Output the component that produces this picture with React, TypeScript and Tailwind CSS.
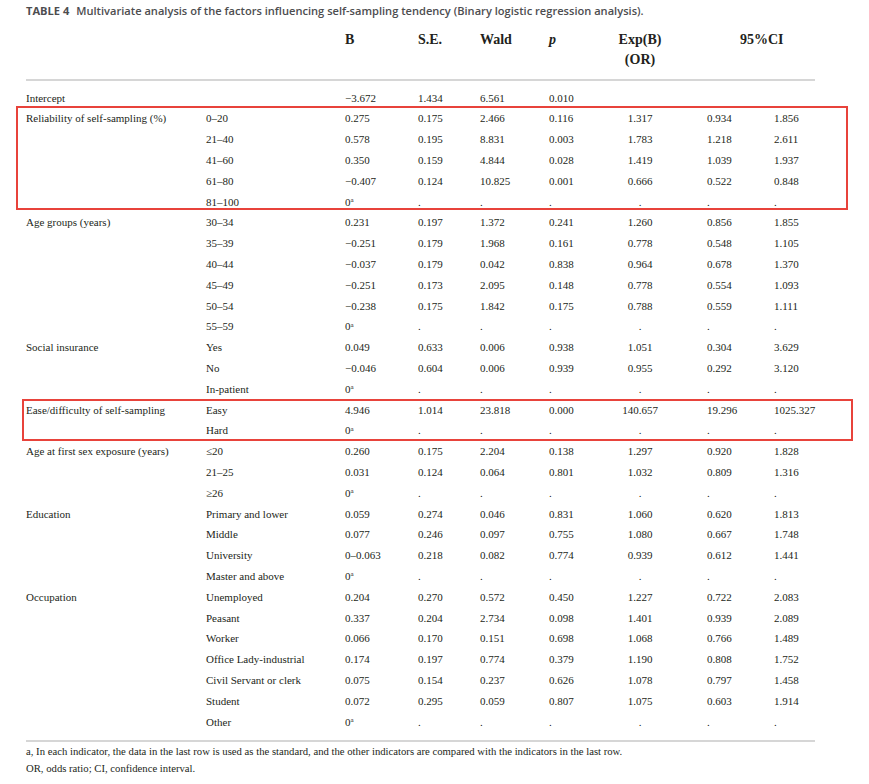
import React from 'react';

type Row = [string, string, string, string, string, string, string, string];

interface Group {
  label: string;
  rows: Row[];
  box?: string;
}

const R = 'REF';
const D = '.';

const groups: Group[] = [
  { label: 'Intercept', rows: [['', '−3.672', '1.434', '6.561', '0.010', '', '', '']] },
  {
    label: 'Reliability of self-sampling (%)',
    box: 'left-[-10px] top-[-2px] bottom-[2px] w-[832px]',
    rows: [
      ['0–20', '0.275', '0.175', '2.466', '0.116', '1.317', '0.934', '1.856'],
      ['21–40', '0.578', '0.195', '8.831', '0.003', '1.783', '1.218', '2.611'],
      ['41–60', '0.350', '0.159', '4.844', '0.028', '1.419', '1.039', '1.937'],
      ['61–80', '−0.407', '0.124', '10.825', '0.001', '0.666', '0.522', '0.848'],
      ['81–100', R, D, D, D, D, D, D],
    ],
  },
  {
    label: 'Age groups (years)',
    rows: [
      ['30–34', '0.231', '0.197', '1.372', '0.241', '1.260', '0.856', '1.855'],
      ['35–39', '−0.251', '0.179', '1.968', '0.161', '0.778', '0.548', '1.105'],
      ['40–44', '−0.037', '0.179', '0.042', '0.838', '0.964', '0.678', '1.370'],
      ['45–49', '−0.251', '0.173', '2.095', '0.148', '0.778', '0.554', '1.093'],
      ['50–54', '−0.238', '0.175', '1.842', '0.175', '0.788', '0.559', '1.111'],
      ['55–59', R, D, D, D, D, D, D],
    ],
  },
  {
    label: 'Social insurance',
    rows: [
      ['Yes', '0.049', '0.633', '0.006', '0.938', '1.051', '0.304', '3.629'],
      ['No', '−0.046', '0.604', '0.006', '0.939', '0.955', '0.292', '3.120'],
      ['In-patient', R, D, D, D, D, D, D],
    ],
  },
  {
    label: 'Ease/difficulty of self-sampling',
    box: 'left-[-4px] top-[-1px] bottom-[0px] w-[831px]',
    rows: [
      ['Easy', '4.946', '1.014', '23.818', '0.000', '140.657', '19.296', '1025.327'],
      ['Hard', R, D, D, D, D, D, D],
    ],
  },
  {
    label: 'Age at first sex exposure (years)',
    rows: [
      ['≤20', '0.260', '0.175', '2.204', '0.138', '1.297', '0.920', '1.828'],
      ['21–25', '0.031', '0.124', '0.064', '0.801', '1.032', '0.809', '1.316'],
      ['≥26', R, D, D, D, D, D, D],
    ],
  },
  {
    label: 'Education',
    rows: [
      ['Primary and lower', '0.059', '0.274', '0.046', '0.831', '1.060', '0.620', '1.813'],
      ['Middle', '0.077', '0.246', '0.097', '0.755', '1.080', '0.667', '1.748'],
      ['University', '0–0.063', '0.218', '0.082', '0.774', '0.939', '0.612', '1.441'],
      ['Master and above', R, D, D, D, D, D, D],
    ],
  },
  {
    label: 'Occupation',
    rows: [
      ['Unemployed', '0.204', '0.270', '0.572', '0.450', '1.227', '0.722', '2.083'],
      ['Peasant', '0.337', '0.204', '2.734', '0.098', '1.401', '0.939', '2.089'],
      ['Worker', '0.066', '0.170', '0.151', '0.698', '1.068', '0.766', '1.489'],
      ['Office Lady-industrial', '0.174', '0.197', '0.774', '0.379', '1.190', '0.808', '1.752'],
      ['Civil Servant or clerk', '0.075', '0.154', '0.237', '0.626', '1.078', '0.797', '1.458'],
      ['Student', '0.072', '0.295', '0.059', '0.807', '1.075', '0.603', '1.914'],
      ['Other', R, D, D, D, D, D, D],
    ],
  },
];

const cols = 'grid grid-cols-[180px_139px_73px_62px_69px_51px_80px_94px_1fr]';

const Cell = ({ v }: { v: string }) =>
  v === R ? (
    <span>
      0<sup className="text-[7px] leading-none">a</sup>
    </span>
  ) : (
    <span>{v}</span>
  );

export default function App() {
  return (
    <div
      className="w-[869px] h-[784px] bg-white pl-[26px] pt-[3px] text-[#231f20]"
      style={{ fontFamily: '"Liberation Serif", serif' }}
    >
      <div
        className="h-[15px] leading-[15px] text-[11.1px] text-[#4d4d4f] font-semibold whitespace-nowrap"
        style={{ fontFamily: '"Open Sans", sans-serif' }}
      >
        <span className="font-bold">TABLE 4</span>
        <span className="ml-[7px]">
          Multivariate analysis of the factors influencing self-sampling tendency (Binary logistic regression analysis).
        </span>
      </div>

      {/* header */}
      <div className={`${cols} mt-[12px] text-[14px] font-bold leading-[20px]`}>
        <div />
        <div />
        <div>B</div>
        <div>S.E.</div>
        <div>Wald</div>
        <div className="italic">p</div>
        <div className="text-center">
          Exp(B)
          <br />
          (OR)
        </div>
        <div className="col-span-2 pl-[60px]">95%CI</div>
      </div>

      <div className="mt-[9px] w-[789px] h-[2px] bg-[#d6d6d6]" />

      {/* body */}
      <div className="pt-[6.6px] text-[11px] leading-[20.8px]">
        {groups.map((g) => (
          <div key={g.label} className="relative">
            {g.box && <div className={`absolute border-2 border-[#e8433b] ${g.box}`} />}
            {g.rows.map((r, i) => (
              <div key={i} className={`${cols} h-[20.8px]`}>
                <div>{i === 0 ? g.label : ''}</div>
                <div>{r[0]}</div>
                <div><Cell v={r[1]} /></div>
                <div><Cell v={r[2]} /></div>
                <div><Cell v={r[3]} /></div>
                <div><Cell v={r[4]} /></div>
                <div className="text-center"><Cell v={r[5]} /></div>
                <div className="pl-[27px]"><Cell v={r[6]} /></div>
                <div><Cell v={r[7]} /></div>
              </div>
            ))}
          </div>
        ))}
      </div>

      <div className="mt-[7.6px] w-[789px] h-[2px] bg-[#d6d6d6]" />

      <div className="mt-[1.5px] text-[10.7px] leading-[17px] whitespace-nowrap">
        <div>
          a, In each indicator, the data in the last row is used as the standard, and the other indicators are compared with the indicators in the last row.
        </div>
        <div>OR, odds ratio; CI, confidence interval.</div>
      </div>
    </div>
  );
}
